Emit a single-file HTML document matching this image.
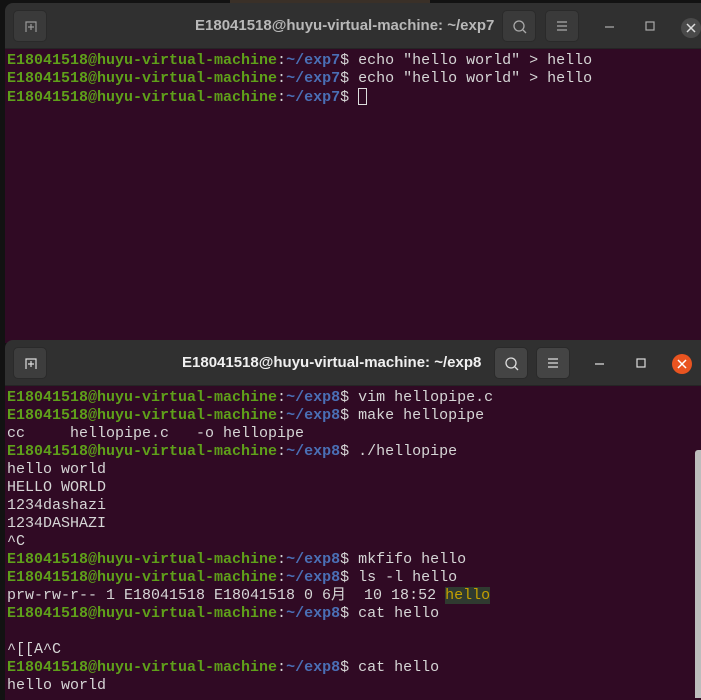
<!DOCTYPE html>
<html><head><meta charset="utf-8"><style>
*{margin:0;padding:0;box-sizing:border-box}
body{width:701px;height:698px;background:#121212;position:relative;overflow:hidden;font-family:"Liberation Mono","Noto Sans CJK SC",monospace}
.win{position:absolute;left:5px;width:710px;border-radius:8px 8px 0 0;overflow:hidden}
.tb{height:46px;background:#303030;position:relative;border-bottom:1px solid #252525}
.btn{position:absolute;top:7px;width:34px;height:32px;border-radius:5px;background:#3a3a3a;border:1px solid #2a2a2a}
.title{position:absolute;top:0;height:46px;line-height:46px;font-family:"Liberation Sans",sans-serif;font-weight:bold;font-size:15px}
.body{background:#300a24;font-size:15px;line-height:18px;color:#d6d6d6;padding:3px 0 0 2px;white-space:pre}
.g{color:#5fa01a;font-weight:bold}.b{color:#4a6fb5;font-weight:bold}
svg{position:absolute}
</style></head><body>
<div style="position:absolute;left:230px;top:0;width:200px;height:4px;background:#3a3028"></div>
<div class="win" style="top:3px;height:340px">
 <div class="tb">
  <div class="btn" style="left:8px"></div>
  <svg style="left:20px;top:18px" width="12" height="12"><path d="M1 11V1h10v10M6 3v6M3 6h6" stroke="#999" fill="none" stroke-width="1.2"/></svg>
  <div class="title" style="left:190px;color:#b8b8b8">E18041518@huyu-virtual-machine: ~/exp7</div>
  <div class="btn" style="left:497px"></div>
  <svg style="left:507px;top:16px" width="16" height="16"><circle cx="7" cy="7" r="5" stroke="#aaa" fill="none" stroke-width="1.3"/><path d="M11 11l3 3" stroke="#aaa" stroke-width="1.3"/></svg>
  <div class="btn" style="left:540px"></div>
  <svg style="left:551px;top:17px" width="12" height="12"><path d="M1 2h10M1 6h10M1 10h10" stroke="#aaa" stroke-width="1.2"/></svg>
  <svg style="left:600px;top:22px" width="10" height="4"><path d="M0 2h9" stroke="#aaa" stroke-width="1.3"/></svg>
  <svg style="left:640px;top:18px" width="10" height="10"><rect x="1" y="1" width="8" height="8" stroke="#aaa" fill="none" stroke-width="1.2"/></svg>
  <svg style="left:675px;top:14px" width="22" height="22"><circle cx="11" cy="11" r="10" fill="#4a4a4a"/><path d="M7 7l8 8M15 7l-8 8" stroke="#ddd" stroke-width="1.5"/></svg>
 </div>
 <div class="body" style="height:294px"><span class="g">E18041518@huyu-virtual-machine</span>:<span class="b">~/exp7</span>$ echo "hello world" &gt; hello
<span class="g">E18041518@huyu-virtual-machine</span>:<span class="b">~/exp7</span>$ echo "hello world" &gt; hello
<span class="g">E18041518@huyu-virtual-machine</span>:<span class="b">~/exp7</span>$ <span style="display:inline-block;width:9px;height:17px;border:1px solid #ddd;vertical-align:-4px"></span></div>
</div>
<div class="win" style="top:340px;height:360px">
 <div class="tb">
  <div class="btn" style="left:8px;background:#3d3d3d"></div>
  <svg style="left:20px;top:18px" width="12" height="12"><path d="M1 11V1h10v10M6 3v6M3 6h6" stroke="#ddd" fill="none" stroke-width="1.2"/></svg>
  <div class="title" style="left:177px;color:#f0f0f0">E18041518@huyu-virtual-machine: ~/exp8</div>
  <div class="btn" style="left:489px;background:#444"></div>
  <svg style="left:499px;top:16px" width="16" height="16"><circle cx="7" cy="7" r="5" stroke="#ddd" fill="none" stroke-width="1.3"/><path d="M11 11l3 3" stroke="#ddd" stroke-width="1.3"/></svg>
  <div class="btn" style="left:531px;background:#444"></div>
  <svg style="left:542px;top:17px" width="12" height="12"><path d="M1 2h10M1 6h10M1 10h10" stroke="#ddd" stroke-width="1.2"/></svg>
  <svg style="left:590px;top:22px" width="10" height="4"><path d="M0 2h9" stroke="#ddd" stroke-width="1.3"/></svg>
  <svg style="left:631px;top:18px" width="10" height="10"><rect x="1" y="1" width="8" height="8" stroke="#ddd" fill="none" stroke-width="1.2"/></svg>
  <svg style="left:666px;top:13px" width="22" height="22"><circle cx="11" cy="11" r="10" fill="#e95420"/><path d="M7 7l8 8M15 7l-8 8" stroke="#fff" stroke-width="1.5"/></svg>
 </div>
 <div class="body" style="height:320px"><span class="g">E18041518@huyu-virtual-machine</span>:<span class="b">~/exp8</span>$ vim hellopipe.c
<span class="g">E18041518@huyu-virtual-machine</span>:<span class="b">~/exp8</span>$ make hellopipe
cc     hellopipe.c   -o hellopipe
<span class="g">E18041518@huyu-virtual-machine</span>:<span class="b">~/exp8</span>$ ./hellopipe
hello world
HELLO WORLD
1234dashazi
1234DASHAZI
^C
<span class="g">E18041518@huyu-virtual-machine</span>:<span class="b">~/exp8</span>$ mkfifo hello
<span class="g">E18041518@huyu-virtual-machine</span>:<span class="b">~/exp8</span>$ ls -l hello
prw-rw-r-- 1 E18041518 E18041518 0 6月  10 18:52 <span style="background:#2f3a30;color:#c4a000">hello</span>
<span class="g">E18041518@huyu-virtual-machine</span>:<span class="b">~/exp8</span>$ cat hello

^[[A^C
<span class="g">E18041518@huyu-virtual-machine</span>:<span class="b">~/exp8</span>$ cat hello
hello world</div>
</div>
<div style="position:absolute;left:695px;top:450px;width:6px;height:248px;background:#bdbdbd;border-radius:3px 0 0 0"></div>
</body></html>
